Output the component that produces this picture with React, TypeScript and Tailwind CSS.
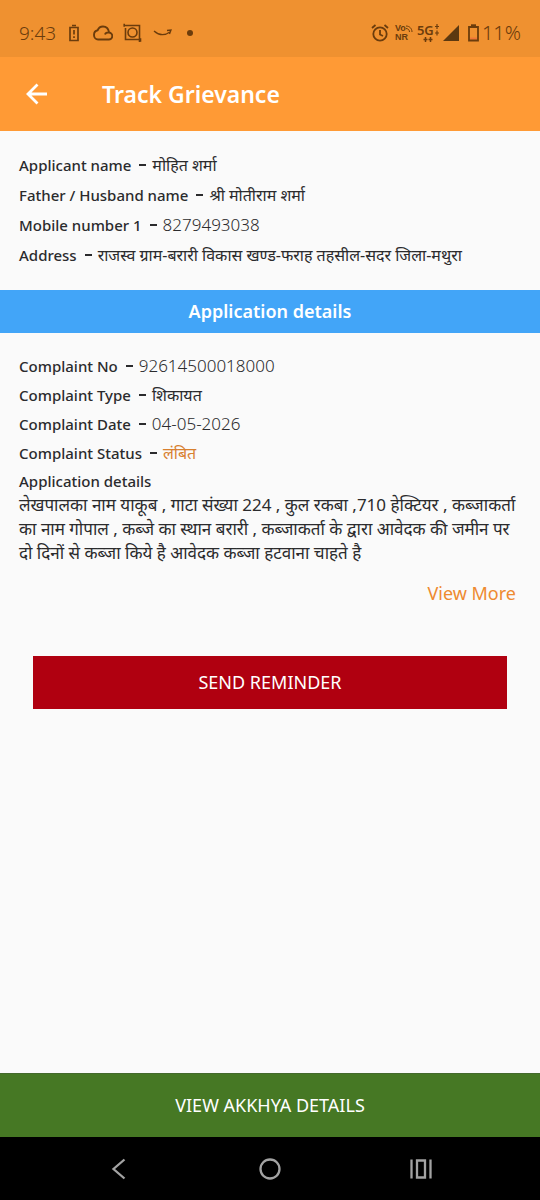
import type { ReactNode } from 'react';

type Detail = { label: string; value: string; numeric?: boolean; pending?: boolean };

const APPLICANT: Detail[] = [
  { label: 'Applicant name', value: 'मोहित शर्मा' },
  { label: 'Father / Husband name', value: 'श्री मोतीराम शर्मा' },
  { label: 'Mobile number 1', value: '8279493038', numeric: true },
  { label: 'Address', value: 'राजस्व ग्राम-बरारी विकास खण्ड-फराह तहसील-सदर जिला-मथुरा' },
];

const COMPLAINT: Detail[] = [
  { label: 'Complaint No', value: '92614500018000', numeric: true },
  { label: 'Complaint Type', value: 'शिकायत' },
  { label: 'Complaint Date', value: '04-05-2026', numeric: true },
  { label: 'Complaint Status', value: 'लंबित', pending: true },
];

export default function App() {
  return (
    <div className="flex min-h-screen flex-col bg-[#fafafa] font-['Noto_Sans',sans-serif] text-[#2b2b2d]">
      <StatusBar />
      <AppBar />
      <main className="flex flex-1 flex-col">
        <section className="px-[19px] pt-[22px] pb-[23px]">
          <DetailList items={APPLICANT} className="gap-[6px]" />
        </section>

        <h2 className="bg-[#42a5f8] py-2 text-center text-[18px] leading-[27px] font-semibold text-white">
          Application details
        </h2>

        <section className="px-[19px] pt-[21px]">
          <DetailList items={COMPLAINT} className="gap-[5px]" />
          <h3 className="mt-1 text-[15px] leading-6 font-medium">Application details</h3>
          <p className="text-[17px] leading-6">
            लेखपालका नाम याकूब , गाटा संख्या 224 , कुल रकबा ,710 हेक्टियर , कब्जाकर्ता का नाम गोपाल , कब्जे का
            स्थान बरारी , कब्जाकर्ता के द्वारा आवेदक की जमीन पर दो दिनों से कब्जा किये है आवेदक कब्जा हटवाना
            चाहते है
          </p>
          <div className="mt-4 flex justify-end pr-[5px]">
            <a href="#more" className="text-[18px] leading-6 text-[#ee8a30]">View More</a>
          </div>
        </section>

        <div className="px-[33px] pt-[51px] pb-8">
          <button type="button" className="h-[53px] w-full bg-[#b00010] text-[18px] text-white">
            SEND REMINDER
          </button>
        </div>
      </main>
      <button type="button" className="h-16 w-full border-t border-[#44692c] bg-[#467824] text-[18px] text-white">
        VIEW AKKHYA DETAILS
      </button>
      <NavBar />
    </div>
  );
}

function DetailList({ items, className }: { items: Detail[]; className: string }) {
  return (
    <dl className={`flex flex-col ${className}`}>
      {items.map((item) => (
        <div key={item.label} className="flex items-center leading-6">
          <dt className="flex shrink-0 items-center text-[15px] font-medium">
            {item.label}
            <span className="mr-[6px] ml-2 h-[2px] w-[7px] bg-[#2b2b2d]" />
          </dt>
          <dd
            className={`${item.numeric ? 'text-[17px] font-light' : 'text-[16px]'} ${item.pending ? 'text-[#d8802f]' : ''}`}
          >
            {item.value}
          </dd>
        </div>
      ))}
    </dl>
  );
}

function StatusBar() {
  return (
    <div className="flex h-[57px] items-center bg-[#ef9130] px-[19px] pt-[8px] text-[#6b3c0c]">
      <span className="w-[39px] text-[19px] leading-6 font-light">9:43</span>
      <svg className="ml-[11px]" width="10" height="18" viewBox="0 0 10 18" fill="none" stroke="currentColor" strokeWidth="1.7">
        <path d="M1 3.5h8v13H1zM3 1.5h4M5 6v4.5M5 12.200v1.800" />
      </svg>
      <svg className="ml-[14px]" width="20" height="16" viewBox="0 0 20 16" fill="none" stroke="currentColor" strokeWidth="1.9">
        <path d="M5 14.500h10.500a3.500 3.500 0 0 0 .6-7C15.500 3.800 13 1.500 10 1.500 7.500 1.500 5.600 2.800 4.700 5.200 2.500 5.600 1 7.500 1 10c0 2.500 1.800 4.500 4 4.500zM12 9.500C12.500 8 14 7.200 16 7.500" />
      </svg>
      <svg className="ml-[10px]" width="20" height="20" viewBox="0 0 20 20" fill="none" stroke="currentColor" strokeWidth="1.6">
        <path d="M1 2.500h15.500V19M2.500 5v11.500H18M1.200 .8v3M17.500 15.200v3.500" />
        <circle cx="9.500" cy="9.500" r="4.500" />
      </svg>
      <svg className="ml-[10px]" width="20" height="8" viewBox="0 0 20 8" fill="none" stroke="currentColor" strokeWidth="1.3">
        <path d="M1 2c5 4.500 11 4.500 16 1M14 1.500l4-.5-1.500 4" />
      </svg>
      <span className="ml-[14px] size-[6px] rounded-full bg-[#6b3c0c]" />

      <div className="ml-auto flex items-center">
        <svg width="18" height="18" viewBox="0 0 18 18" fill="none" stroke="currentColor" strokeWidth="1.8">
          <circle cx="9" cy="10" r="6.700" />
          <path d="M9 6v4.500l3 1.500M1 4l3.500-3M17 4l-3.500-3" />
        </svg>
        <span className="ml-[6px] flex w-[19px] flex-col font-['Liberation_Sans',sans-serif] text-[9px] leading-[9px] font-bold">
          <span className="flex items-center">
            Vo
            <svg className="shrink-0" width="7" height="7" viewBox="0 0 7 7" fill="none" stroke="currentColor">
              <path d="M0 1c3.500 0 6 2.500 6 6M0 3.500C2 3.500 3.500 5 3.500 7" />
            </svg>
          </span>
          <span>NR</span>
        </span>
        <span className="ml-[3px] flex w-[23px] flex-col">
          <span className="flex items-center text-[13px] leading-[13px] font-semibold">
            5G
            <svg className="shrink-0" width="6" height="12" viewBox="0 0 6 12" fill="none" stroke="currentColor" strokeWidth="1.200">
              <path d="M3 0v5M1 2.500h4M3 6.500v5M1 9h4" />
            </svg>
          </span>
          <svg className="ml-[6px]" width="10" height="5" viewBox="0 0 10 5" fill="none" stroke="currentColor" strokeWidth="1.500">
            <path d="M2.500 0v5M.5 2.500h4M7.500 0v5M5.500 2.500h4" />
          </svg>
        </span>
        <svg className="ml-[3px]" width="16" height="16" viewBox="0 0 16 16" fill="#5c3810">
          <path d="M16 0v16H0z" />
        </svg>
        <svg className="ml-[9px]" width="11" height="18" viewBox="0 0 11 18" fill="none" stroke="currentColor" strokeWidth="1.800">
          <path d="M2 14.500h7" stroke="#f0743a" />
          <path d="M1 3h9v13.500H1z" />
          <path d="M3 1.200h5" />
        </svg>
        <span className="ml-[3px] text-[20px] leading-6 font-light">11%</span>
      </div>
    </div>
  );
}

function AppBar() {
  return (
    <header className="flex h-[74px] items-center bg-[#ff9a35] px-[26px] text-white">
      <button type="button" aria-label="Back">
        <svg width="22" height="22" viewBox="0 0 22 22" fill="none" stroke="currentColor" strokeWidth="2.800">
          <path d="M21 11H2.500M11.500 1.500L2 11l9.500 9.500" />
        </svg>
      </button>
      <h1 className="ml-[54px] text-[23px] leading-8 font-semibold">Track Grievance</h1>
    </header>
  );
}

function NavButton({ label, children }: { label: string; children: ReactNode }) {
  return (
    <button type="button" aria-label={label} className="flex w-[151px] justify-center text-[#a3a3a3]">
      <svg width="22" height="22" viewBox="0 0 22 22" fill="none" stroke="currentColor" strokeWidth="2.300">
        {children}
      </svg>
    </button>
  );
}

function NavBar() {
  return (
    <nav className="flex h-[63px] items-center justify-center bg-black">
      <NavButton label="Back">
        <path d="M16.500 1.500L5.500 11l11 9.500" />
      </NavButton>
      <NavButton label="Home">
        <circle cx="11" cy="11" r="9.500" />
      </NavButton>
      <NavButton label="Recent apps">
        <path d="M1.500 1.500v19M20.500 1.500v19M7 2.500h8v17H7z" />
      </NavButton>
    </nav>
  );
}
